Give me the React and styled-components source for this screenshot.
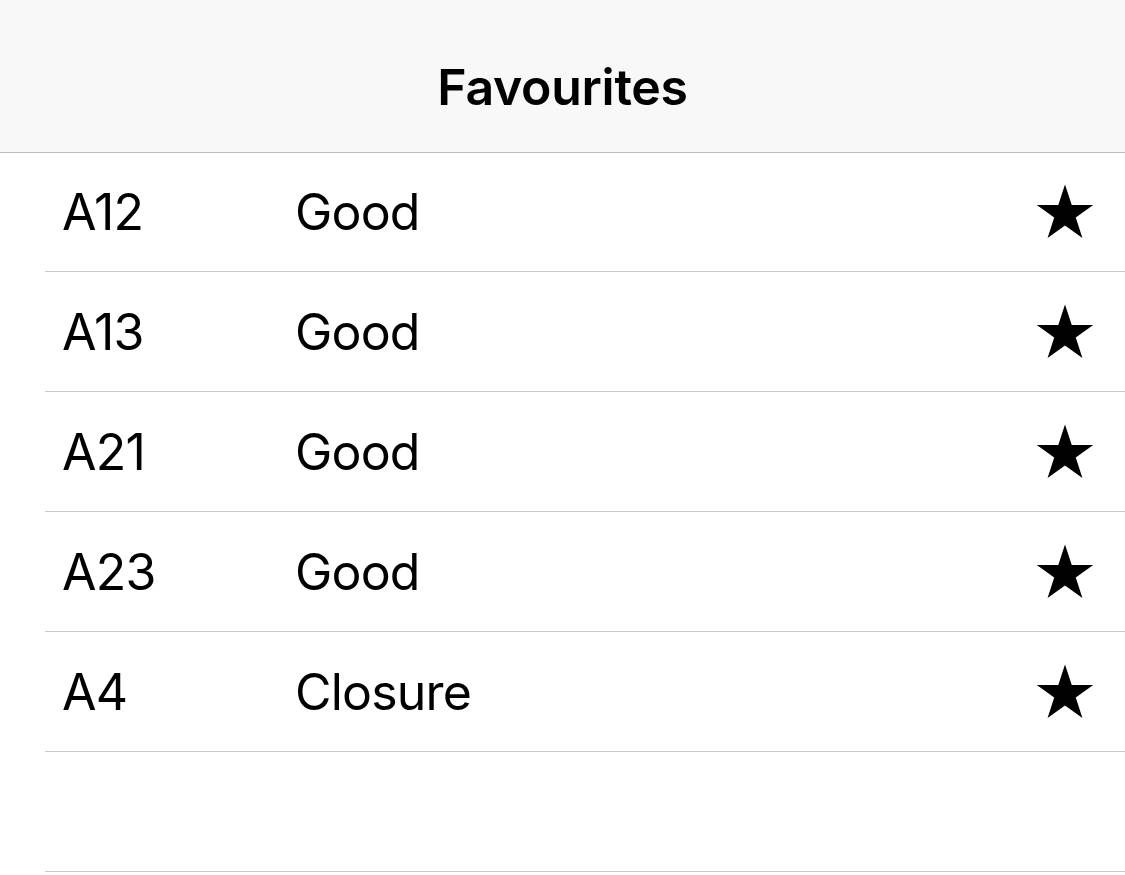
import React from "react";
import styled, { createGlobalStyle } from "styled-components";

const Global = createGlobalStyle`
  html, body { margin: 0; padding: 0; background: #ffffff; }
  body { font-family: Inter, "Noto Sans", sans-serif; color: #000; -webkit-font-smoothing: antialiased; }
`;

const Page = styled.div`
  width: 1125px;
  height: 875px;
  overflow: hidden;
  background: #fff;
`;

const NavBar = styled.header`
  height: 153px;
  background: #f8f8f8;
  border-bottom: 1px solid #bdbdbd;
  display: flex;
  align-items: center;
  justify-content: center;
  box-sizing: border-box;
  padding-top: 22px;
`;

const Title = styled.h1`
  margin: 0;
  font-size: 50px;
  font-weight: 600;
  letter-spacing: -0.3px;
`;

const List = styled.ul`
  list-style: none;
  margin: 0;
  padding: 0 0 0 45px;
`;

const Row = styled.li`
  height: 120px;
  box-sizing: border-box;
  border-bottom: 1px solid #c8c7cc;
  display: grid;
  grid-template-columns: 233px 1fr 60px;
  align-items: center;
  padding: 0 30px 0 17px;

  &:first-child {
    height: 119px;
  }
`;

const Cell = styled.span`
  font-size: 50px;
  font-weight: 400;
  letter-spacing: -0.8px;
`;

const Star = styled.svg`
  width: 60px;
  height: 60px;
  display: block;
`;

const StarIcon = () => (
  <Star viewBox="0 0 100 100">
    <polygon
      fill="#000"
      points="50,4 61.2,38.2 97,38.2 68,59.3 79,93.5 50,72.4 21,93.5 32,59.3 3,38.2 38.8,38.2"
    />
  </Star>
);

const data = [
  ["A12", "Good"],
  ["A13", "Good"],
  ["A21", "Good"],
  ["A23", "Good"],
  ["A4", "Closure"],
];

export default function App() {
  return (
    <Page>
      <Global />
      <NavBar>
        <Title>Favourites</Title>
      </NavBar>
      <List>
        {data.map(([id, status]) => (
          <Row key={id}>
            <Cell>{id}</Cell>
            <Cell>{status}</Cell>
            <StarIcon />
          </Row>
        ))}
        <Row />
      </List>
    </Page>
  );
}
